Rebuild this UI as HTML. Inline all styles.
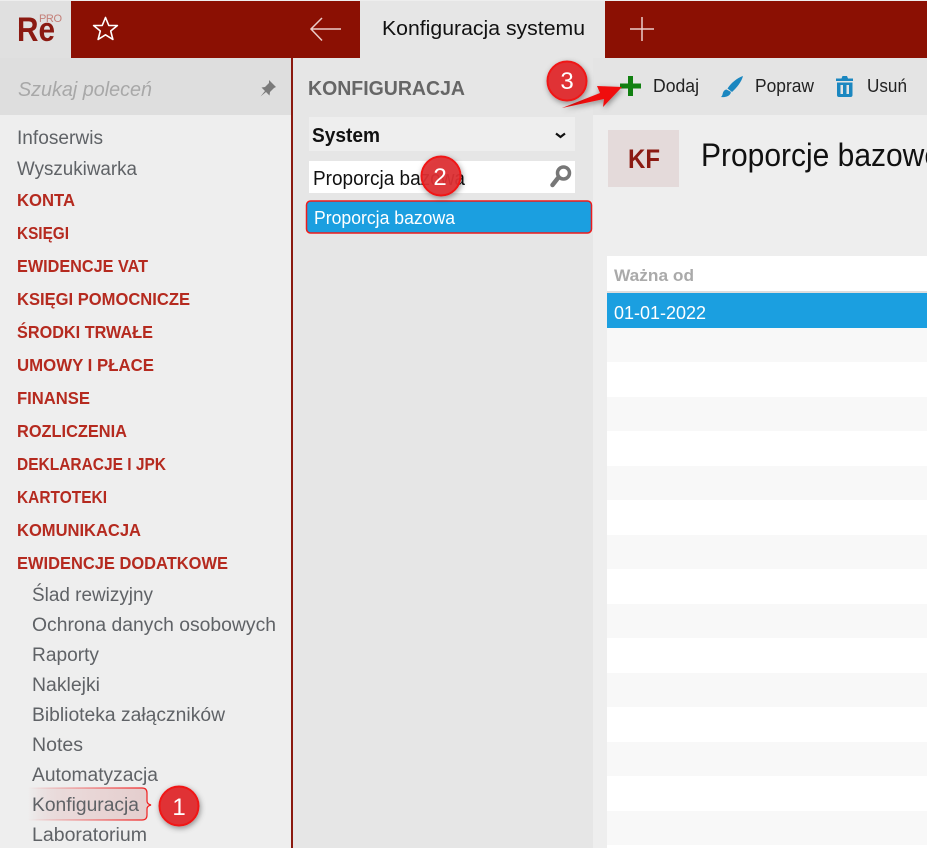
<!DOCTYPE html>
<html lang="pl"><head><meta charset="utf-8"><title>Konfiguracja systemu</title>
<style>
html,body{margin:0;padding:0;background:#eee;width:927px;height:848px;overflow:hidden}
svg{display:block}
text{font-family:"Liberation Sans",sans-serif}
.n{font-size:19px;fill:#5f6266}
.r{font-size:17.500px;font-weight:bold;fill:#b52a1f}
.t{font-size:18px;fill:#222}
</style></head><body>
<svg width="927" height="848" viewBox="0 0 927 848" xmlns="http://www.w3.org/2000/svg">
<defs>
<filter id="sh" x="-40%" y="-40%" width="180%" height="180%"><feDropShadow dx="1" dy="2" stdDeviation="3" flood-color="#000" flood-opacity=".4"/></filter>
<linearGradient id="cg" x1="0" x2="1" y1="0" y2="0"><stop offset="0" stop-color="#e0c0c0" stop-opacity="0"/><stop offset=".35" stop-color="#ead9d9"/><stop offset="1" stop-color="#e4cdcd"/></linearGradient>
<linearGradient id="cl" x1="0" x2="1" y1="0" y2="0"><stop offset="0" stop-color="#f01818" stop-opacity="0"/><stop offset=".7" stop-color="#f01818" stop-opacity=".7"/><stop offset="1" stop-color="#f01818"/></linearGradient>
</defs>
<!-- backgrounds -->
<rect width="927" height="848" fill="#eee"/>
<rect x="0" y="1" width="927" height="57" fill="#8b1003"/>
<rect x="0" y="1" width="71" height="57" fill="#e0e0e0"/>
<rect x="360" y="1" width="245" height="57" fill="#e6e6e6"/>
<rect x="0" y="58" width="291" height="57" fill="#dedede"/>
<rect x="291" y="58" width="2" height="790" fill="#8b1a10"/>
<rect x="293" y="58" width="300" height="790" fill="#e6e6e6"/>
<rect x="593" y="58" width="334" height="57" fill="#e4e4e4"/>
<!-- logo and top icons -->
<text x="17" y="41" font-size="34" font-weight="bold" fill="#8b1a12" textLength="38" lengthAdjust="spacingAndGlyphs">Re</text>
<text x="39" y="22" font-size="11" fill="#c47f78" textLength="23" lengthAdjust="spacing">PRO</text>
<path d="M105.500 17.500l3.300 8h8.600l-6.700 5.500 2.200 8.500-7.400-4.700-7.400 4.700 2.200-8.500-6.700-5.500h8.600z" fill="none" stroke="#fff" stroke-width="1.600" stroke-linejoin="round"/>
<path d="M341 29H311M322 18L311 29L322 40.500" fill="none" stroke="#ebcdc9" stroke-width="1.500"/>
<path d="M630 29H654M642 17V41" fill="none" stroke="#ebcdc9" stroke-width="1.500"/>
<text x="382" y="35" font-size="20" fill="#111" textLength="203" lengthAdjust="spacingAndGlyphs">Konfiguracja systemu</text>
<!-- search -->
<text x="18" y="96" font-size="20" font-style="italic" fill="#a8a8a8" textLength="134" lengthAdjust="spacingAndGlyphs">Szukaj poleceń</text>
<path d="M269 80l7 7-2 1-4 4-.5 3.500-3.500-3.500-5.500 4.500 4.500-5.500-3.500-3.500 3.500-.5 4-4z" fill="#7a7a7a"/>
<!-- nav -->
<text class="n" x="17" y="144" textLength="86" lengthAdjust="spacingAndGlyphs">Infoserwis</text>
<text class="n" x="17" y="175" textLength="120" lengthAdjust="spacingAndGlyphs">Wyszukiwarka</text>
<text class="r" x="17" y="206" textLength="58" lengthAdjust="spacingAndGlyphs">KONTA</text>
<text class="r" x="17" y="239" textLength="52" lengthAdjust="spacingAndGlyphs">KSIĘGI</text>
<text class="r" x="17" y="272" textLength="131" lengthAdjust="spacingAndGlyphs">EWIDENCJE VAT</text>
<text class="r" x="17" y="305" textLength="173" lengthAdjust="spacingAndGlyphs">KSIĘGI POMOCNICZE</text>
<text class="r" x="17" y="338" textLength="136" lengthAdjust="spacingAndGlyphs">ŚRODKI TRWAŁE</text>
<text class="r" x="17" y="371" textLength="137" lengthAdjust="spacingAndGlyphs">UMOWY I PŁACE</text>
<text class="r" x="17" y="404" textLength="73" lengthAdjust="spacingAndGlyphs">FINANSE</text>
<text class="r" x="17" y="437" textLength="110" lengthAdjust="spacingAndGlyphs">ROZLICZENIA</text>
<text class="r" x="17" y="470" textLength="149" lengthAdjust="spacingAndGlyphs">DEKLARACJE I JPK</text>
<text class="r" x="17" y="503" textLength="90" lengthAdjust="spacingAndGlyphs">KARTOTEKI</text>
<text class="r" x="17" y="536" textLength="124" lengthAdjust="spacingAndGlyphs">KOMUNIKACJA</text>
<text class="r" x="17" y="569" textLength="211" lengthAdjust="spacingAndGlyphs">EWIDENCJE DODATKOWE</text>
<text class="n" x="32" y="601" textLength="121" lengthAdjust="spacingAndGlyphs">Ślad rewizyjny</text>
<text class="n" x="32" y="631" textLength="244" lengthAdjust="spacingAndGlyphs">Ochrona danych osobowych</text>
<text class="n" x="32" y="661" textLength="67" lengthAdjust="spacingAndGlyphs">Raporty</text>
<text class="n" x="32" y="691" textLength="68" lengthAdjust="spacingAndGlyphs">Naklejki</text>
<text class="n" x="32" y="721" textLength="193" lengthAdjust="spacingAndGlyphs">Biblioteka załączników</text>
<text class="n" x="32" y="751" textLength="51" lengthAdjust="spacingAndGlyphs">Notes</text>
<text class="n" x="32" y="781" textLength="126" lengthAdjust="spacingAndGlyphs">Automatyzacja</text>
<!-- callout 1 -->
<path d="M28 788H142q5 0 5 5v8q0 3 4 4q-4 1-4 4v6q0 5-5 5H28z" fill="url(#cg)"/>
<path d="M28 788H142q5 0 5 5v8q0 3 4 4q-4 1-4 4v6q0 5-5 5H28" fill="none" stroke="url(#cl)" stroke-width="1.200"/>
<text class="n" x="32" y="811" textLength="107" lengthAdjust="spacingAndGlyphs">Konfiguracja</text>
<text class="n" x="32" y="841" textLength="115" lengthAdjust="spacingAndGlyphs">Laboratorium</text>
<!-- middle panel -->
<text x="308" y="95" font-size="20" font-weight="bold" fill="#666" textLength="157" lengthAdjust="spacingAndGlyphs">KONFIGURACJA</text>
<rect x="309" y="117" width="266" height="34" fill="#eee"/>
<text x="312" y="142" font-size="20" font-weight="bold" fill="#111" textLength="68" lengthAdjust="spacingAndGlyphs">System</text>
<path d="M556 133.500l4.500 3.500 4.500-3.500" fill="none" stroke="#111" stroke-width="2.200"/>
<rect x="309" y="161" width="266" height="32" fill="#fff"/>
<text x="313" y="185" font-size="20" fill="#111" textLength="152" lengthAdjust="spacingAndGlyphs">Proporcja bazowa</text>
<circle cx="563.500" cy="173" r="6" fill="none" stroke="#777" stroke-width="3.500"/>
<path d="M558 178L552.500 185" stroke="#777" stroke-width="4.500" stroke-linecap="round"/>
<rect x="306.500" y="201" width="285" height="32" rx="4" fill="#1b9fe0" stroke="#ee1c1c" stroke-width="1.500"/>
<text x="314" y="224" font-size="18" fill="#fff" textLength="141" lengthAdjust="spacingAndGlyphs">Proporcja bazowa</text>
<!-- toolbar -->
<path d="M620 83.500h8V76h5v7.500h8v5h-8V96h-5v-7.500h-8z" fill="#118011"/>
<text class="t" x="653" y="92" textLength="46" lengthAdjust="spacingAndGlyphs">Dodaj</text>
<path d="M743 76c-6 2-12 7-15.500 12.500l4.500 3.500c4.500-4 9.500-10 11-16zM726.500 89.500c-3 .5-3.500 3-4 5-.3 1-.8 2-1.500 2.500 4 .5 8-.5 9.500-3.500.4-.8.4-1.300.2-1.800z" fill="#1b87c0"/>
<text class="t" x="755" y="92" textLength="59" lengthAdjust="spacingAndGlyphs">Popraw</text>
<path d="M836 78.500h5.500l1-2.500h4.500l1 2.500h5v2.500H836zM837 82.500h15.500V95q0 2-2 2H839q-2 0-2-2zM840.500 85v9h2.500v-9zM846.500 85v9h2.500v-9z" fill-rule="evenodd" fill="#1b87c0"/>
<text class="t" x="867" y="92" textLength="40" lengthAdjust="spacingAndGlyphs">Usuń</text>
<!-- content -->
<rect x="608" y="130" width="71" height="57" fill="#e4dada"/>
<text x="628" y="168" font-size="27" font-weight="bold" fill="#8b1a12" textLength="32" lengthAdjust="spacingAndGlyphs">KF</text>
<text x="701" y="166" font-size="32" fill="#111" textLength="240" lengthAdjust="spacingAndGlyphs">Proporcje bazowe</text>
<rect x="607" y="256" width="320" height="592" fill="#fff"/>
<rect x="607" y="291" width="320" height="2" fill="#ddd"/>
<text x="614" y="281" font-size="17" font-weight="bold" fill="#aaa" textLength="80" lengthAdjust="spacingAndGlyphs">Ważna od</text>
<rect x="607" y="293" width="320" height="35" fill="#1b9fe0"/>
<text x="614" y="319" font-size="18" fill="#fff" textLength="92" lengthAdjust="spacingAndGlyphs">01-01-2022</text>
<g fill="#f8f8f8">
<rect x="607" y="328" width="320" height="34"/><rect x="607" y="397" width="320" height="34"/><rect x="607" y="466" width="320" height="34"/><rect x="607" y="535" width="320" height="34"/><rect x="607" y="604" width="320" height="34"/><rect x="607" y="673" width="320" height="34"/><rect x="607" y="742" width="320" height="34"/><rect x="607" y="811" width="320" height="34"/>
</g>
<!-- annotations -->
<path d="M562 108L600 93L597 86L622 87L603 107L604 99z" fill="#f01010" filter="url(#sh)"/>
<g filter="url(#sh)" fill="#e03234" stroke="#f01818" stroke-width="2">
<circle cx="179" cy="806" r="19.500"/><circle cx="567" cy="81" r="19.500"/>
</g>
<circle cx="441" cy="176" r="19.500" fill="#e03234" fill-opacity=".92" stroke="#f01818" stroke-width="2" filter="url(#sh)"/>
<g font-size="24" fill="#fff" text-anchor="middle">
<text x="179" y="815">1</text><text x="440" y="185">2</text><text x="567" y="89">3</text>
</g>
</svg>
</body></html>
